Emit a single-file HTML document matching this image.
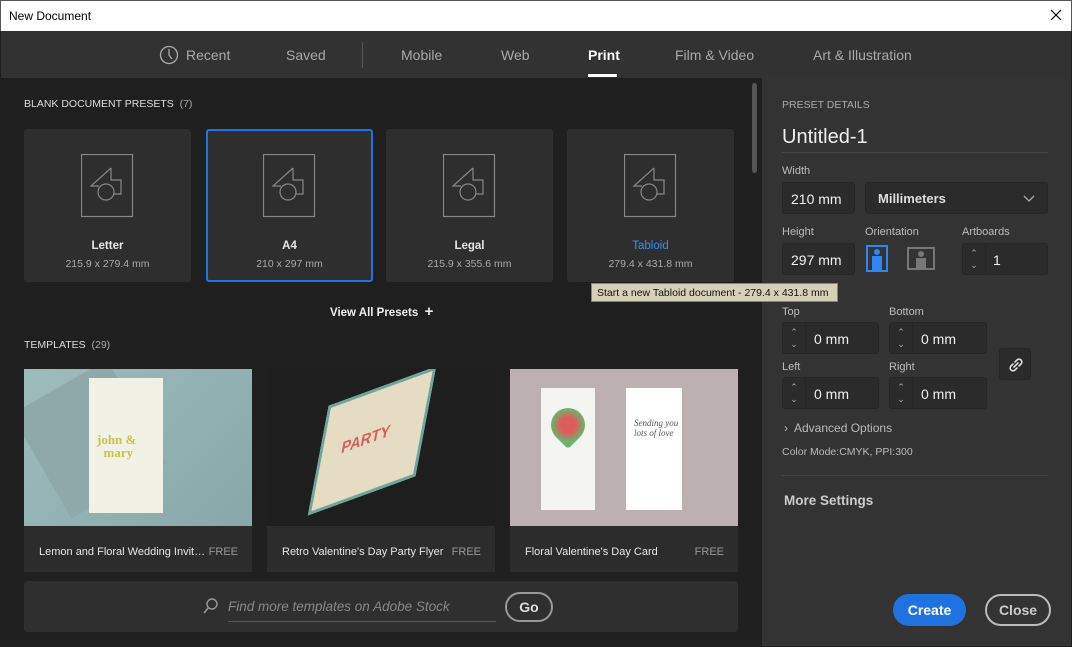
<!DOCTYPE html>
<html><head><meta charset="utf-8"><style>
*{box-sizing:border-box;margin:0;padding:0}
body{width:1072px;height:647px;overflow:hidden;background:#1f1f1f;font-family:"Liberation Sans",sans-serif;position:relative}
.a{position:absolute}
.t{color:#d8d8d8;font-size:14px}
.card{position:absolute;top:129px;width:167px;height:153px;background:#2e2e2e;border-radius:3px;text-align:center}
.card svg{position:absolute;left:57px;top:25px}
.card .n{position:absolute;top:111px;width:100%;font-size:11.5px;font-weight:bold;color:#e6e6e6}
.card .d{position:absolute;top:129px;width:100%;font-size:10.5px;color:#aaa}
.tp{position:absolute;top:369px;width:228px;height:203px;background:#2c2c2c}
.tp .img{height:157px;position:relative;overflow:hidden}
.tp .l{position:absolute;top:177px;left:15px;font-size:11px;color:#e6e6e6;white-space:nowrap}
.tp .f{position:absolute;top:177px;right:14px;font-size:11px;color:#999}
.lab{position:absolute;font-size:11px;color:#bdbdbd}
.box{position:absolute;border:1px solid #262626;background:#2b2b2b;border-radius:3px;color:#f0f0f0;font-size:14px}
.spin{position:absolute;left:0;top:0;bottom:0;width:23px;border-right:1px solid #262626;color:#aaa;font-size:9px;text-align:center;line-height:12px;padding-top:3px}
</style></head><body>
<div class="a" style="left:0;top:0;width:1072px;height:31px;background:#fff;border:1px solid #555;border-bottom:none"></div>
<div class="a" style="left:9px;top:9px;font-size:12px;color:#000">New Document</div>
<svg class="a" style="left:1050px;top:9px" width="12" height="12"><path d="M1 1L11 11M11 1L1 11" stroke="#000" stroke-width="1.2"/></svg>
<div class="a" style="left:1px;top:31px;width:1070px;height:47px;background:#323232"></div>
<svg class="a" style="left:159px;top:45px" width="20" height="20"><circle cx="10" cy="10" r="8.5" fill="none" stroke="#aaa" stroke-width="1.3"/><path d="M10 4v6l3 4" fill="none" stroke="#aaa" stroke-width="1.3"/></svg>
<div class="a t" style="left:186px;top:47px;color:#aaa;font-size:14px">Recent</div>
<div class="a t" style="left:286px;top:47px;color:#aaa;font-size:14px">Saved</div>
<div class="a" style="left:362px;top:42px;width:1px;height:26px;background:#555"></div>
<div class="a t" style="left:401px;top:47px;color:#aaa;font-size:14px">Mobile</div>
<div class="a t" style="left:501px;top:47px;color:#aaa;font-size:14px">Web</div>
<div class="a t" style="left:588px;top:47px;color:#fff;font-size:14px;font-weight:bold">Print</div>
<div class="a" style="left:588px;top:74px;width:29px;height:3px;background:#fff"></div>
<div class="a t" style="left:675px;top:47px;color:#aaa;font-size:14px">Film &amp; Video</div>
<div class="a t" style="left:813px;top:47px;color:#aaa;font-size:14px">Art &amp; Illustration</div>

<div class="a" style="left:24px;top:98px;font-size:10.5px;color:#ddd">BLANK DOCUMENT PRESETS &nbsp;<span style="color:#aaa">(7)</span></div>
<div class="a" style="left:752px;top:83px;width:5px;height:90px;background:#555;border-radius:3px"></div>

<svg width="0" height="0" style="position:absolute"><defs><g id="ic"><rect x="0.5" y="0.5" width="51" height="62" fill="none" stroke="#888" stroke-width="1.2"/><path d="M30 14 L10 32 L18 32" fill="none" stroke="#888" stroke-width="1.2"/><path d="M30 14 V26 H40 V40 H33" fill="none" stroke="#888" stroke-width="1.2"/><circle cx="25" cy="38" r="8" fill="none" stroke="#888" stroke-width="1.2"/></g></defs></svg>
<div class="card" style="left:24px"><svg width="54" height="64"><use href="#ic"/></svg><div class="n">Letter</div><div class="d">215.9 x 279.4 mm</div></div>
<div class="card" style="left:206px;width:167px;border:2px solid #1f73e6"><svg width="54" height="64" style="left:55px;top:23px"><use href="#ic"/></svg><div class="n" style="top:109px">A4</div><div class="d" style="top:127px">210 x 297 mm</div></div>
<div class="card" style="left:386px"><svg width="54" height="64"><use href="#ic"/></svg><div class="n">Legal</div><div class="d">215.9 x 355.6 mm</div></div>
<div class="card" style="left:567px"><svg width="54" height="64"><use href="#ic"/></svg><div class="n" style="color:#3a8ff0;font-weight:normal">Tabloid</div><div class="d">279.4 x 431.8 mm</div></div>

<div class="a" style="left:330px;top:303px;font-size:11.5px;font-weight:bold;color:#eee">View All Presets &nbsp;<span style="font-size:15px">+</span></div>
<div class="a" style="left:24px;top:339px;font-size:10.5px;color:#ddd">TEMPLATES &nbsp;<span style="color:#aaa">(29)</span></div>

<div class="tp" style="left:24px"><div class="img" style="background:linear-gradient(135deg,#9fbcbd,#87a7a9)"><div class="a" style="left:10px;top:10px;width:110px;height:120px;background:#8fa9aa;transform:rotate(-30deg)"></div><div class="a" style="left:65px;top:9px;width:74px;height:135px;background:#f2f1e6"><div style="margin:55px 0 0 8px;color:#c9c34a;font:bold 13px 'Liberation Serif',serif;line-height:13px">john &amp;<br>&nbsp;&nbsp;mary</div></div></div><div class="l">Lemon and Floral Wedding Invit…</div><div class="f">FREE</div></div>
<div class="tp" style="left:267px"><div class="img" style="background:#1e1e1e"><div class="a" style="left:50px;top:22px;width:110px;height:100px;background:#e6dcc3;transform:skewY(-30deg) rotate(12deg);border:3px solid #6fa59c"><div style="color:#d75d5d;font-weight:bold;font-size:15px;margin:35px 0 0 20px">PARTY</div></div></div><div class="l">Retro Valentine's Day Party Flyer</div><div class="f">FREE</div></div>
<div class="tp" style="left:510px"><div class="img" style="background:#bcb0b0"><div class="a" style="left:31px;top:19px;width:54px;height:122px;background:#f4f4f0"><div style="margin:20px auto 0;width:34px;height:34px;background:radial-gradient(circle,#e05a5a 30%,#6bb56b 70%);border-radius:50% 50% 10% 50%;transform:rotate(45deg)"></div></div><div class="a" style="left:116px;top:19px;width:56px;height:122px;background:#fff"><div style="margin:30px 0 0 8px;font:italic 9px 'Liberation Serif',serif;color:#555">Sending you<br>lots of love</div></div></div><div class="l">Floral Valentine's Day Card</div><div class="f">FREE</div></div>

<div class="a" style="left:24px;top:581px;width:714px;height:51px;background:#2f2f2f;border-radius:3px"></div>
<svg class="a" style="left:202px;top:598px" width="16" height="18"><circle cx="10" cy="6" r="5" fill="none" stroke="#999" stroke-width="1.4"/><path d="M6.5 9.5 L2 15" stroke="#999" stroke-width="1.6"/></svg>
<div class="a" style="left:228px;top:599px;font-size:13.5px;font-style:italic;color:#888">Find more templates on Adobe Stock</div>
<div class="a" style="left:228px;top:621px;width:268px;height:1px;background:#555"></div>
<div class="a" style="left:505px;top:592px;width:48px;height:30px;border:2px solid #999;border-radius:16px;color:#ddd;font-size:14px;font-weight:bold;text-align:center;line-height:26px">Go</div>

<div class="a" style="left:762px;top:78px;width:309px;height:568px;background:#333"></div>
<div class="lab" style="left:782px;top:99px;font-size:10.5px;color:#aaa">PRESET DETAILS</div>
<div class="a" style="left:782px;top:126px;font-size:20px;color:#f0f0f0">Untitled-1</div>
<div class="a" style="left:782px;top:152px;width:266px;height:1px;background:#444"></div>
<div class="lab" style="left:782px;top:165px">Width</div>
<div class="box" style="left:782px;top:182px;width:73px;height:32px;padding:8px 0 0 8px">210 mm</div>
<div class="box" style="left:865px;top:182px;width:183px;height:32px;padding:8px 0 0 12px;font-weight:bold;font-size:13px;color:#ddd">Millimeters<svg class="a" style="right:12px;top:12px" width="12" height="8"><path d="M1 1L6 6L11 1" fill="none" stroke="#aaa" stroke-width="1.3"/></svg></div>
<div class="lab" style="left:782px;top:226px">Height</div>
<div class="lab" style="left:865px;top:226px">Orientation</div>
<div class="lab" style="left:962px;top:226px">Artboards</div>
<div class="box" style="left:782px;top:243px;width:73px;height:32px;padding:8px 0 0 8px">297 mm</div>
<svg class="a" style="left:866px;top:245px" width="70" height="27"><rect x="1" y="1" width="20" height="25" fill="none" stroke="#2f86f0" stroke-width="2"/><circle cx="11" cy="7" r="3" fill="#2f86f0"/><rect x="6" y="11" width="10" height="14" fill="#2f86f0"/><rect x="42" y="3" width="26" height="21" fill="none" stroke="#777" stroke-width="2"/><circle cx="55" cy="9" r="3" fill="#777"/><rect x="50" y="13" width="10" height="10" fill="#777"/></svg>
<div class="box" style="left:962px;top:243px;width:86px;height:32px"><div class="spin">⌃<br>⌄</div><span class="a" style="left:30px;top:8px">1</span></div>
<div class="lab" style="left:782px;top:306px">Top</div>
<div class="lab" style="left:889px;top:306px">Bottom</div>
<div class="box" style="left:782px;top:322px;width:97px;height:32px"><div class="spin">⌃<br>⌄</div><span class="a" style="left:31px;top:8px">0 mm</span></div>
<div class="box" style="left:889px;top:322px;width:98px;height:32px"><div class="spin">⌃<br>⌄</div><span class="a" style="left:31px;top:8px">0 mm</span></div>
<div class="lab" style="left:782px;top:361px">Left</div>
<div class="lab" style="left:889px;top:361px">Right</div>
<div class="box" style="left:782px;top:377px;width:97px;height:32px"><div class="spin">⌃<br>⌄</div><span class="a" style="left:31px;top:8px">0 mm</span></div>
<div class="box" style="left:889px;top:377px;width:98px;height:32px"><div class="spin">⌃<br>⌄</div><span class="a" style="left:31px;top:8px">0 mm</span></div>
<div class="box" style="left:999px;top:348px;width:32px;height:32px"><svg class="a" style="left:8px;top:8px" width="16" height="16"><path d="M7 5l2-2a2.8 2.8 0 0 1 4 4l-2 2M9 11l-2 2a2.8 2.8 0 0 1-4-4l2-2M6 10l4-4" fill="none" stroke="#ddd" stroke-width="1.6" stroke-linecap="round"/></svg></div>
<div class="lab" style="left:784px;top:421px;font-size:12px;color:#bbb">›&nbsp; Advanced Options</div>
<div class="lab" style="left:782px;top:446px;font-size:10.5px;color:#bbb">Color Mode:CMYK, PPI:300</div>
<div class="a" style="left:782px;top:475px;width:266px;height:1px;background:#444"></div>
<div class="a" style="left:784px;top:493px;font-size:13.5px;font-weight:bold;color:#ccc">More Settings</div>
<div class="a" style="left:893px;top:594px;width:73px;height:32px;background:#1f73e0;border-radius:16px;color:#fff;font-size:14px;font-weight:bold;text-align:center;line-height:32px">Create</div>
<div class="a" style="left:985px;top:594px;width:66px;height:32px;border:2px solid #bbb;border-radius:16px;color:#ccc;font-size:14px;font-weight:bold;text-align:center;line-height:28px">Close</div>

<div class="a" style="left:591px;top:283px;width:247px;height:19px;background:#d7d0b8;border:1px solid #8a8470;font-size:10.5px;color:#111;padding:3px 0 0 5px;white-space:nowrap;overflow:hidden">Start a new Tabloid document - 279.4 x 431.8 mm</div>
</body></html>
